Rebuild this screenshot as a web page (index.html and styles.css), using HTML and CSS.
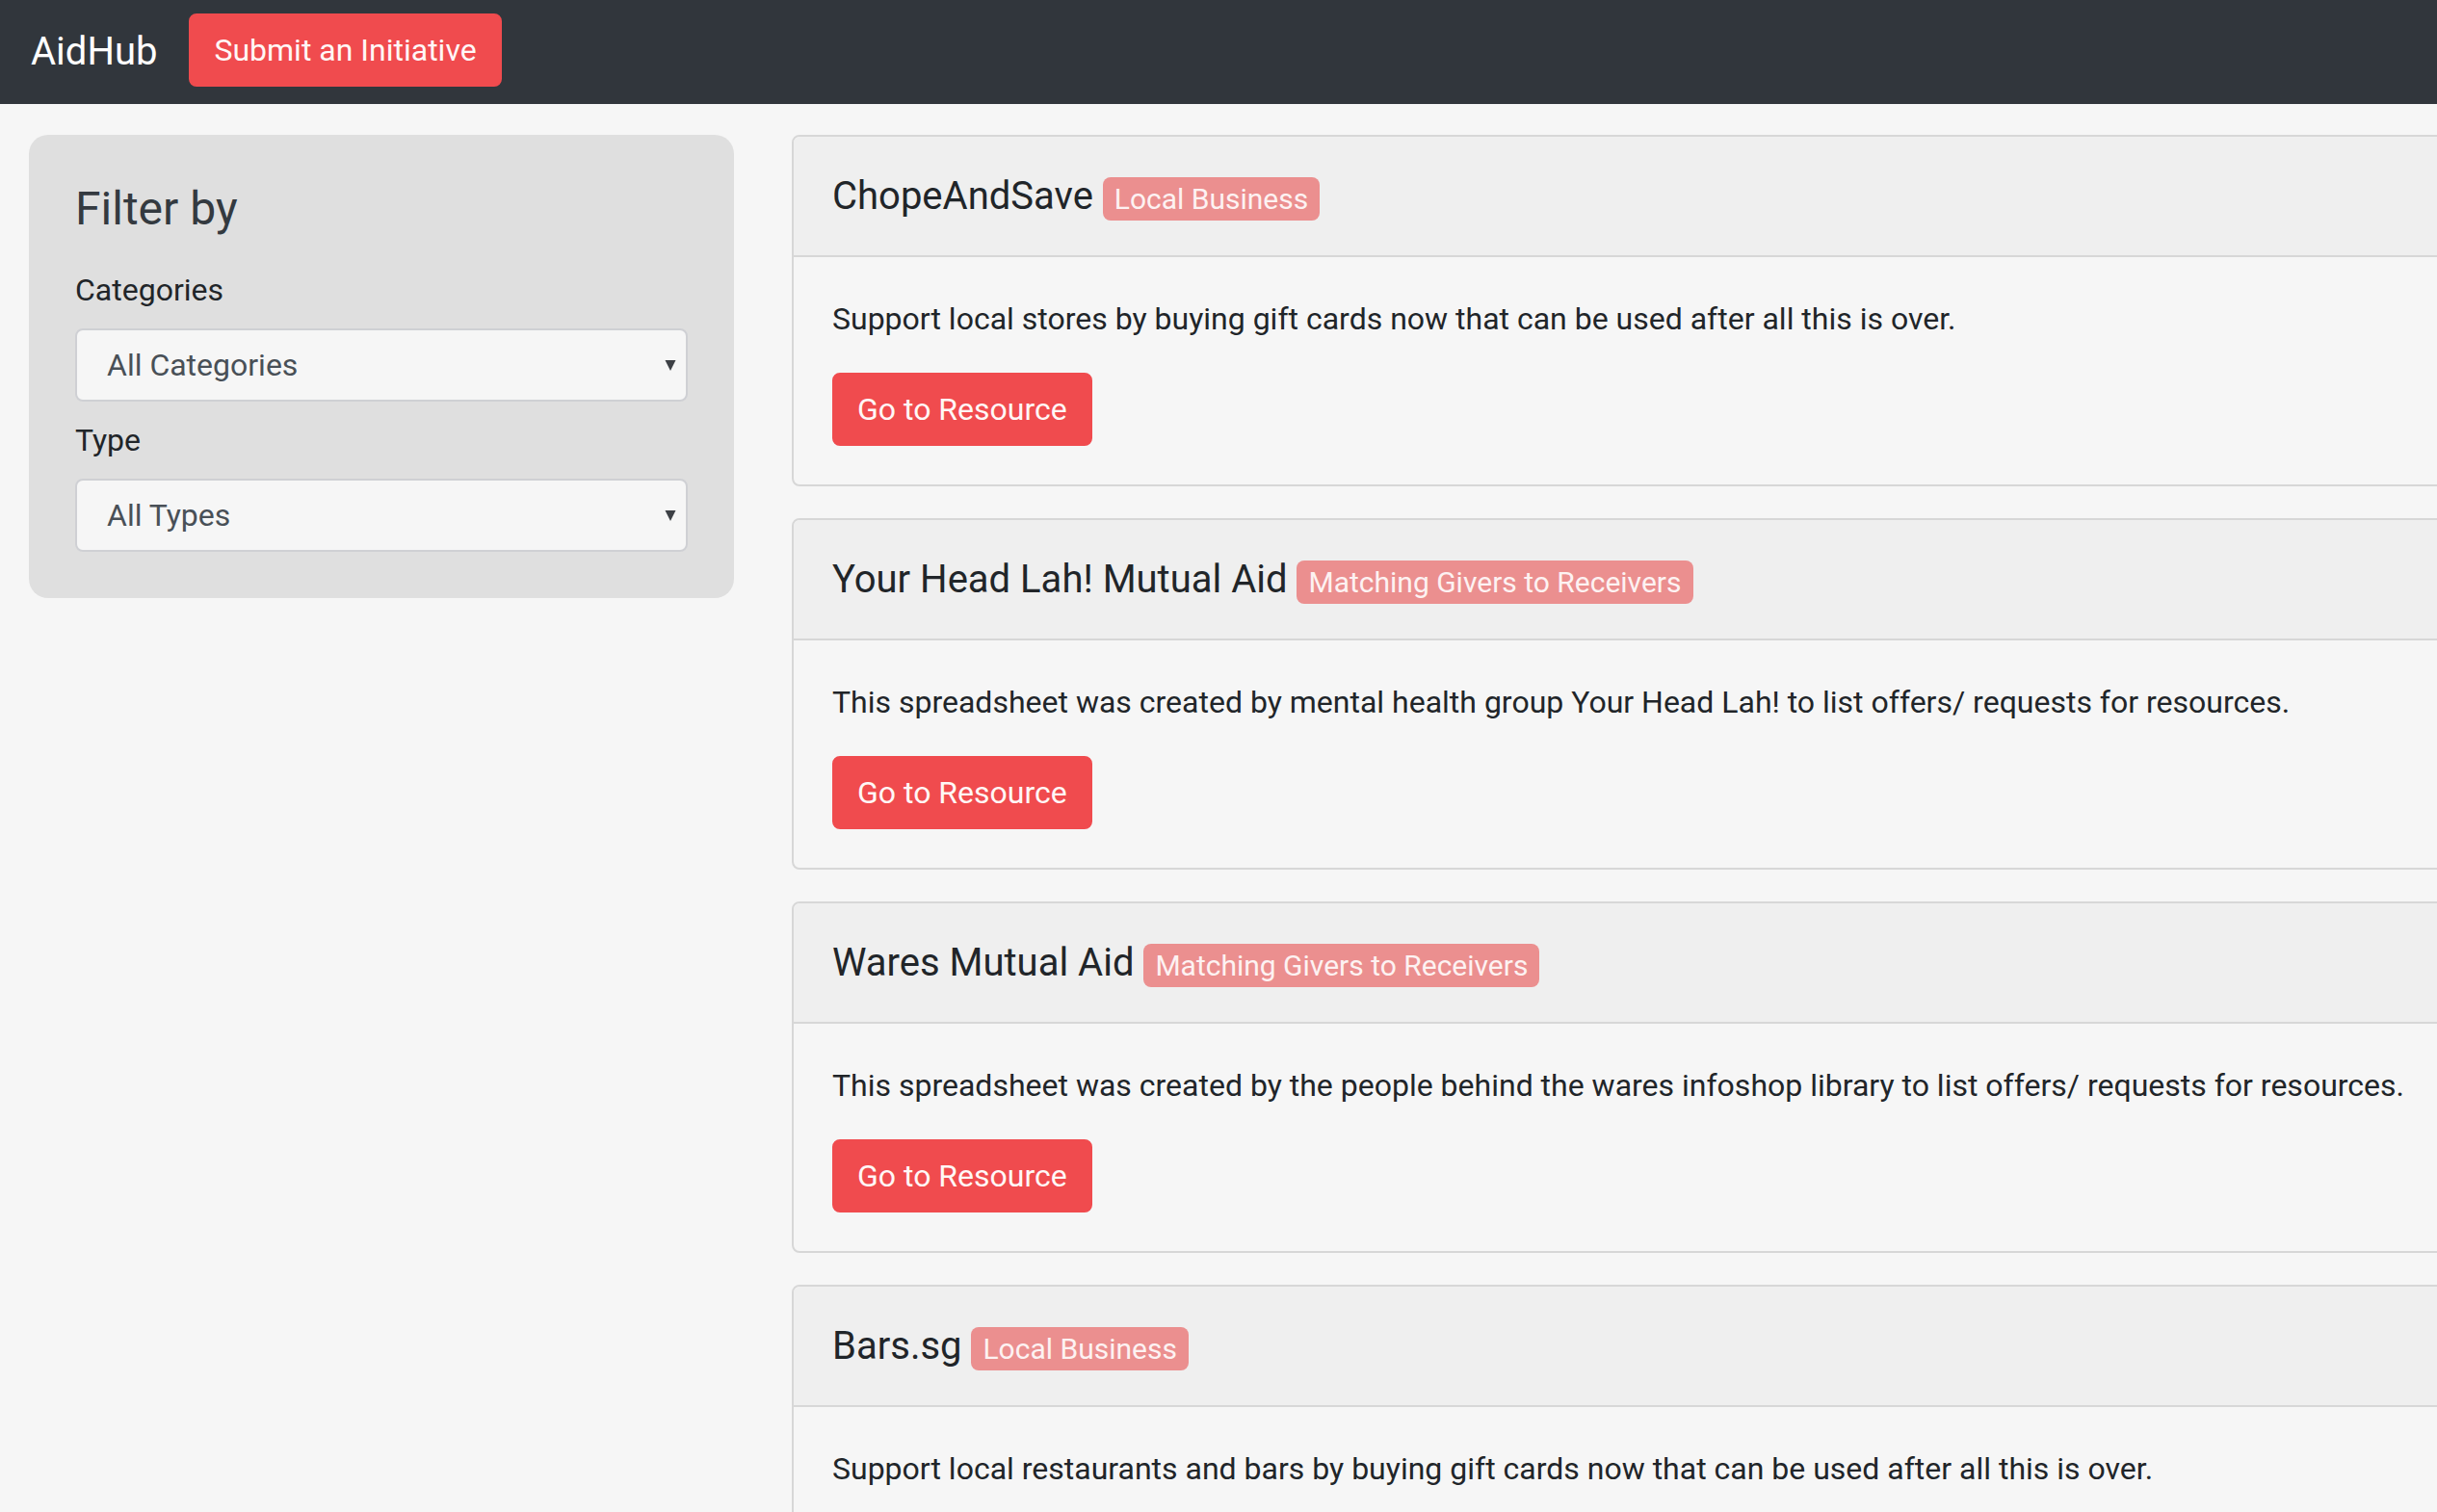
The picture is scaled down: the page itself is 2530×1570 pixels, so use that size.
FILE: index.html
```html
<!DOCTYPE html>
<html lang="en">
<head>
<meta charset="utf-8">
<title>AidHub</title>
<link rel="stylesheet" href="styles.css">
</head>
<body>
<nav class="navbar">
  <a class="brand" href="#">AidHub</a>
  <a class="btn btn-red" href="#">Submit an Initiative</a>
</nav>
<div class="layout">
  <aside class="filter">
    <h4 class="filter-title">Filter by</h4>
    <div class="field">
      <label class="field-label">Categories</label>
      <div class="select"><span>All Categories</span><svg class="caret" width="12" height="12" viewBox="0 0 12 12"><path d="M0.5 1H11.5L6 12Z"/></svg></div>
    </div>
    <div class="field">
      <label class="field-label">Type</label>
      <div class="select"><span>All Types</span><svg class="caret" width="12" height="12" viewBox="0 0 12 12"><path d="M0.5 1H11.5L6 12Z"/></svg></div>
    </div>
  </aside>
  <main class="list">
    <section class="card">
      <div class="card-header"><h5 class="card-title">ChopeAndSave <span class="badge">Local Business</span></h5></div>
      <div class="card-body">
        <p class="card-text">Support local stores by buying gift cards now that can be used after all this is over.</p>
        <a class="btn btn-red" href="#">Go to Resource</a>
      </div>
    </section>
    <section class="card">
      <div class="card-header"><h5 class="card-title">Your Head Lah! Mutual Aid <span class="badge">Matching Givers to Receivers</span></h5></div>
      <div class="card-body">
        <p class="card-text">This spreadsheet was created by mental health group Your Head Lah! to list offers/ requests for resources.</p>
        <a class="btn btn-red" href="#">Go to Resource</a>
      </div>
    </section>
    <section class="card">
      <div class="card-header"><h5 class="card-title">Wares Mutual Aid <span class="badge">Matching Givers to Receivers</span></h5></div>
      <div class="card-body">
        <p class="card-text">This spreadsheet was created by the people behind the wares infoshop library to list offers/ requests for resources.</p>
        <a class="btn btn-red" href="#">Go to Resource</a>
      </div>
    </section>
    <section class="card">
      <div class="card-header"><h5 class="card-title">Bars.sg <span class="badge">Local Business</span></h5></div>
      <div class="card-body">
        <p class="card-text">Support local restaurants and bars by buying gift cards now that can be used after all this is over.</p>
        <a class="btn btn-red" href="#">Go to Resource</a>
      </div>
    </section>
  </main>
</div>
</body>
</html>
```
FILE: styles.css
```css
html, body {
  margin: 0;
  padding: 0;
  overflow: hidden;
}
body {
  background: #f6f6f6;
  font-family: Roboto, "Liberation Sans", sans-serif;
  font-size: 32px;
  line-height: 1.5;
  color: #212529;
}
.navbar {
  display: flex;
  align-items: flex-start;
  padding: 14px 32px;
  background: #31363c;
}
.brand {
  color: #ffffff;
  font-size: 40px;
  line-height: 60px;
  padding: 10px 0;
  margin-right: 33px;
  text-decoration: none;
}
.btn {
  display: inline-block;
  font-size: 32px;
  line-height: 48px;
  padding: 12px 24px;
  border: 2px solid transparent;
  border-radius: 8px;
  text-decoration: none;
}
.btn-red {
  background: #f04b4e;
  border-color: #f04b4e;
  color: #fff7f6;
}
.layout {
  display: flex;
  align-items: flex-start;
  gap: 60px;
  padding: 32px 0 0 30px;
}
.filter {
  flex: none;
  width: 732px;
  box-sizing: border-box;
  padding: 48px;
  background: #dfdfdf;
  border-radius: 20px;
}
.filter-title {
  margin: 0 0 31px;
  font-size: 48px;
  font-weight: 400;
  line-height: 1.2;
  color: #343a40;
}
.field + .field {
  margin-top: 16px;
}
.field-label {
  display: block;
  line-height: 48px;
  margin-bottom: 16px;
}
.select {
  height: 76px;
  box-sizing: border-box;
  display: flex;
  align-items: center;
  justify-content: space-between;
  padding: 0 10px 0 31px;
  border: 2px solid #cfd0d4;
  border-radius: 8px;
  background: #f6f6f6;
  color: #495057;
}
.caret path {
  fill: #3d4045;
}
.list {
  flex: none;
  width: 1740px;
  display: flex;
  flex-direction: column;
  gap: 33px;
}
.card {
  border: 2px solid #d7d7d7;
  border-radius: 8px;
  background: #f6f6f6;
  overflow: hidden;
}
.card-header {
  padding: 37.5px 40px 36px;
  background: #efefef;
  border-bottom: 2px solid #d7d7d7;
}
.card-title {
  margin: 0;
  font-size: 40px;
  font-weight: 400;
  line-height: 1.2;
  color: #212529;
}
.badge {
  display: inline-block;
  font-size: 30px;
  line-height: 1;
  padding: 7.5px 12px;
  border-radius: 8px;
  background: #eb8f8f;
  color: #fdf2f2;
  vertical-align: baseline;
}
.card-body {
  padding: 40px;
}
.card-text {
  margin: 0 0 32px;
}
```
